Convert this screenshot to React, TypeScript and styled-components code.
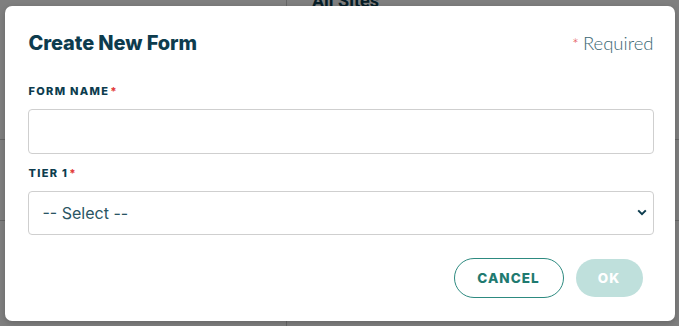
import React from "react";
import styled, { createGlobalStyle } from "styled-components";

const GlobalStyle = createGlobalStyle`
  html, body {
    margin: 0;
    padding: 0;
    height: 100%;
    background: #fff;
    font-family: Inter, "Noto Sans", sans-serif;
  }
  #root {
    height: 100%;
  }
`;

const Page = styled.div`
  position: relative;
  width: 100%;
  height: 100vh;
  overflow: hidden;
  display: grid;
  grid-template-columns: 287px 1fr;
  background: #fff;
`;

const SideCol = styled.div`
  border-right: 1px solid #ccc;
  display: flex;
  flex-direction: column;
`;

const MainCol = styled.div`
  display: flex;
  flex-direction: column;
`;

const ColTitle = styled.div`
  font-family: Roboto, sans-serif;
  font-weight: 700;
  font-size: 18px;
  line-height: 20px;
  color: #0d3c4e;
  margin-top: -9px;
  padding-left: 25px;
  height: 69px;
`;

const RowLine = styled.div<{ $h: number }>`
  height: ${(p) => p.$h}px;
  border-bottom: 1px solid #ccc;
`;

const Backdrop = styled.div`
  position: absolute;
  inset: 0;
  background: rgba(0, 0, 0, 0.5);
  display: flex;
  align-items: center;
  justify-content: center;
`;

const Modal = styled.div`
  width: 670px;
  box-sizing: border-box;
  background: #fff;
  border-radius: 7px;
  padding: 23px 21px 23px 23px;
  display: flex;
  flex-direction: column;
  box-shadow: 0 2px 6px rgba(0, 0, 0, 0.2);
  & > * {
    flex-shrink: 0;
  }
`;

const Header = styled.div`
  display: flex;
  justify-content: space-between;
  align-items: baseline;
  padding-left: 1px;
  margin-bottom: 27px;
`;

const Title = styled.h2`
  margin: 0;
  font-size: 20px;
  line-height: 28px;
  font-weight: 800;
  color: #0d3c4e;
  letter-spacing: -0.1px;
`;

const RequiredNote = styled.span`
  font-family: Lato, Inter, sans-serif;
  font-size: 18.5px;
  font-weight: 300;
  color: #3a6773;
`;

const Star = styled.span`
  color: #e23a3a;
  font-size: 16px;
  margin-right: 4px;
`;

const Label = styled.label`
  display: block;
  font-size: 11px;
  line-height: 14px;
  font-weight: 800;
  letter-spacing: 1.3px;
  color: #0d3c4e;
  padding-left: 1px;
  margin-bottom: 11px;
`;

const LabelStar = styled.span`
  color: #e23a3a;
  margin-left: 1px;
`;

const TextInput = styled.input`
  display: block;
  width: 100%;
  height: 45px;
  box-sizing: border-box;
  border: 1px solid #cfcfcf;
  border-radius: 4px;
  padding: 0 15px;
  font: inherit;
  font-size: 16px;
  color: #2a5563;
  margin: 0 0 12px;
  outline: none;
`;

const SelectWrap = styled.div`
  position: relative;
  margin-bottom: 23px;
`;

const Select = styled.select`
  display: block;
  width: 100%;
  height: 44px;
  box-sizing: border-box;
  border: 1px solid #cfcfcf;
  border-radius: 4px;
  padding: 0 14px;
  font-family: Inter, sans-serif;
  font-size: 16px;
  font-weight: 400;
  color: #2a5563;
  background: #fff;
  appearance: none;
  outline: none;
`;

const Chevron = styled.svg`
  position: absolute;
  right: 7px;
  top: 18px;
  pointer-events: none;
`;

const Actions = styled.div`
  display: flex;
  justify-content: flex-end;
  align-items: center;
  gap: 12px;
  padding-right: 11px;
`;

const Button = styled.button<{ $variant: "outline" | "solid" }>`
  height: ${(p) => (p.$variant === "outline" ? 40 : 38)}px;
  box-sizing: border-box;
  border-radius: 20px;
  font-family: Inter, sans-serif;
  font-size: 13.5px;
  font-weight: 800;
  letter-spacing: 1px;
  cursor: pointer;
  ${(p) =>
    p.$variant === "outline"
      ? `
    width: 110px;
    background: #fff;
    border: 1px solid #2d8a80;
    color: #1f7a70;
  `
      : `
    width: 67px;
    background: #bfe0dc;
    border: none;
    color: #fff;
  `}
`;

export default function App() {
  return (
    <>
      <GlobalStyle />
      <Page>
        <SideCol>
          <ColTitle />
          <RowLine $h={79} />
          <RowLine $h={80} />
        </SideCol>
        <MainCol>
          <ColTitle>All Sites</ColTitle>
          <RowLine $h={79} />
          <RowLine $h={80} />
        </MainCol>
        <Backdrop>
          <Modal>
            <Header>
              <Title>Create New Form</Title>
              <RequiredNote>
                <Star>*</Star>Required
              </RequiredNote>
            </Header>
            <Label htmlFor="form-name">
              FORM NAME<LabelStar>*</LabelStar>
            </Label>
            <TextInput id="form-name" type="text" />
            <Label htmlFor="tier-1">
              TIER 1<LabelStar>*</LabelStar>
            </Label>
            <SelectWrap>
              <Select id="tier-1" defaultValue="">
                <option value="">-- Select --</option>
              </Select>
              <Chevron width="10" height="7" viewBox="0 0 10 7">
                <path
                  d="M1.2 1.4 L5 5.2 L8.8 1.4"
                  fill="none"
                  stroke="#0d3c4e"
                  strokeWidth="2"
                />
              </Chevron>
            </SelectWrap>
            <Actions>
              <Button $variant="outline">CANCEL</Button>
              <Button $variant="solid">OK</Button>
            </Actions>
          </Modal>
        </Backdrop>
      </Page>
    </>
  );
}
